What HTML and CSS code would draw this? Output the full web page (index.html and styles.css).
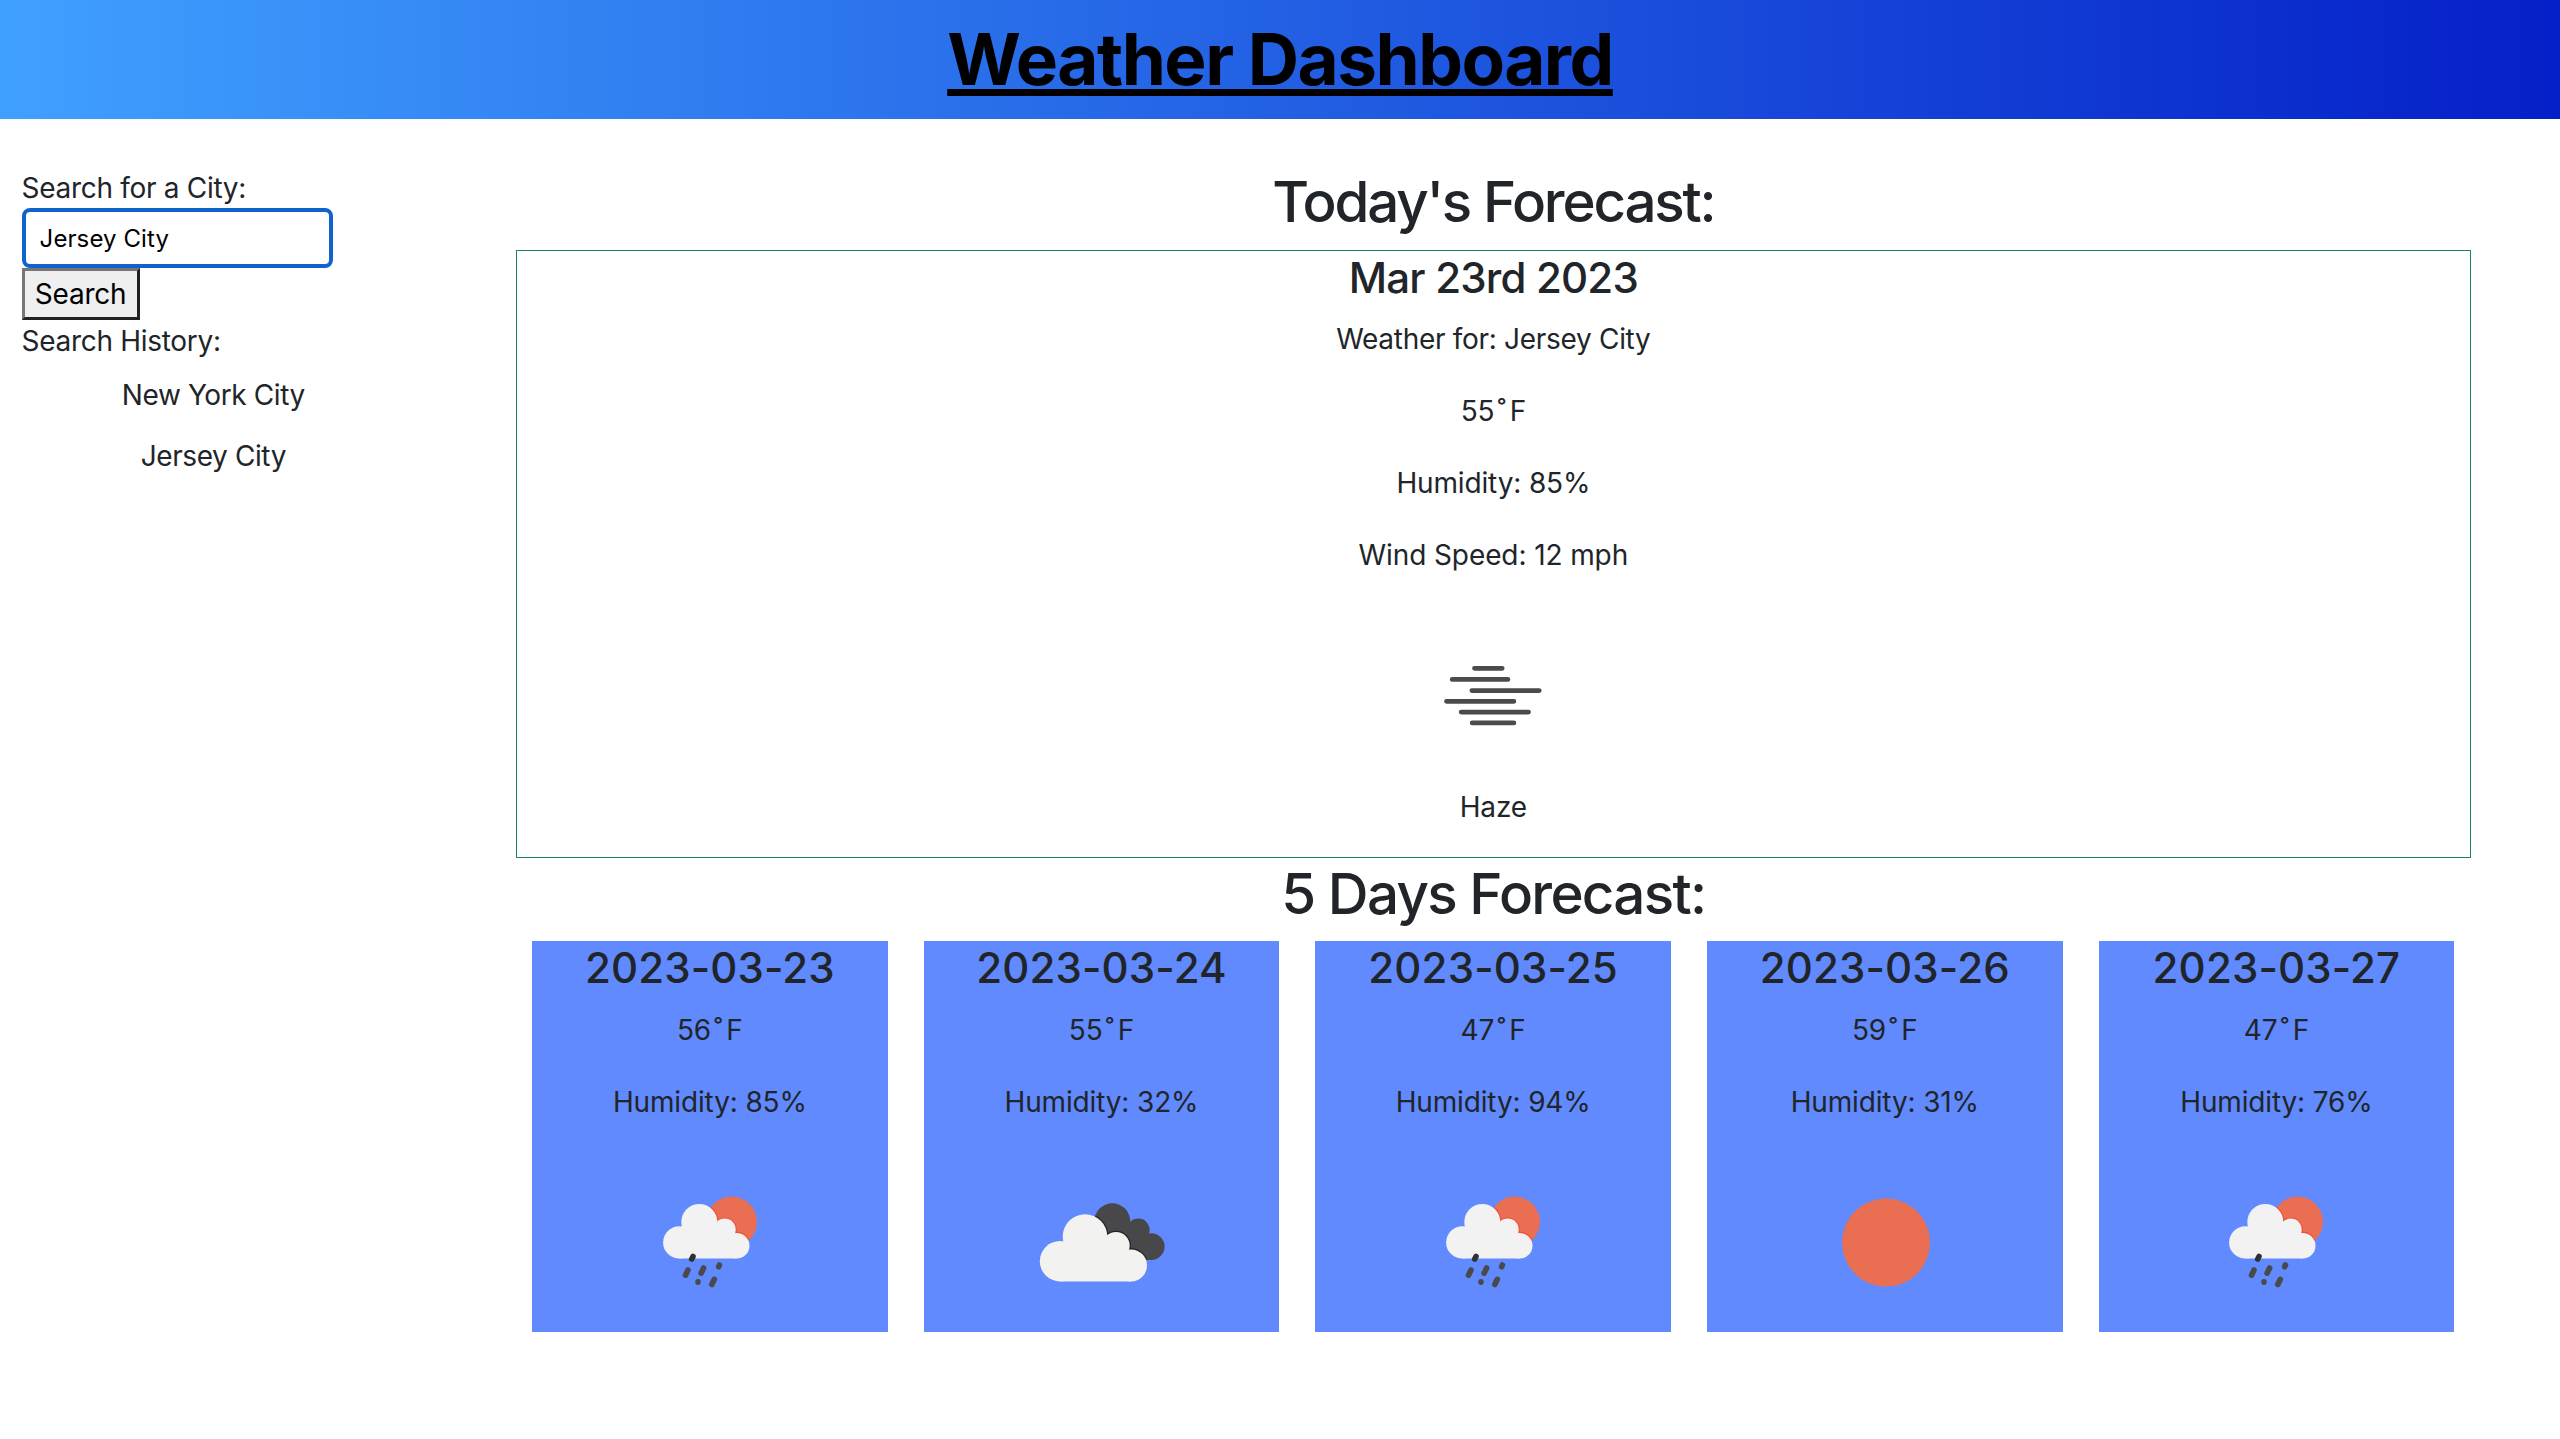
FILE: index.html
```
<!DOCTYPE html>
<html lang="en">
<head>
  <meta charset="utf-8">
  <title>Weather Dashboard</title>
  <link rel="stylesheet" href="styles.css">
</head>
<body>
  <svg class="sprite" aria-hidden="true">
    <defs>
      <clipPath id="sun-clip"><circle cx="111.7" cy="70.9" r="25.3"/></clipPath>
      <clipPath id="dark-clip">
        <circle cx="101.3" cy="70.3" r="18"/><circle cx="127.3" cy="78.9" r="11.3"/><circle cx="140.3" cy="95.6" r="13.3"/>
        <path d="M98 80H128L140 90V108.900H98Z"/>
      </clipPath>
      <g id="small-cloud">
        <circle cx="79.3" cy="70.9" r="18"/><circle cx="59.3" cy="91.4" r="16.2"/>
        <circle cx="104.7" cy="78.6" r="11"/><circle cx="116.7" cy="94.8" r="12.8"/>
        <path d="M59.300 82L70 72H98L106 84H116.700V107.600H59.300Z"/>
      </g>
      <g id="big-cloud">
        <circle cx="74" cy="85.600" r="22.300"/><circle cx="49" cy="110.200" r="20.200"/>
        <circle cx="105" cy="94.600" r="13.700"/><circle cx="120" cy="114.400" r="16"/>
        <path d="M49 98L60 90H96L106 100H120V130.400H49Z"/>
      </g>
      <symbol id="rain" viewBox="0 0 180 180">
        <circle cx="111.7" cy="70.9" r="25.3" fill="#ea6e51"/>
        <g clip-path="url(#sun-clip)"><use href="#small-cloud" fill="#ee5238" stroke="#ee5238" stroke-width="2.400"/></g>
        <use href="#small-cloud" fill="#f2f2f2"/>
        <g stroke="#4a4a4c" stroke-width="5.600" stroke-linecap="round">
          <path d="M73 105.500L71.700 108" stroke="#303030"/>
          <path d="M68 119L65.500 124.200M83.600 117L81.100 122.200M99.400 114L98.600 115.800M78 130.700L78 131.100M94.300 128.300L91.800 133.500"/>
        </g>
      </symbol>
      <symbol id="clouds" viewBox="0 0 180 180">
        <g clip-path="url(#dark-clip)">
          <path d="M80 50H156V111H80Z" fill="#48484a"/>
          <use href="#big-cloud" stroke="#242425" stroke-width="2.400" fill="#242425"/>
        </g>
        <use href="#big-cloud" fill="#f2f2f1"/>
      </symbol>
      <symbol id="sun" viewBox="0 0 180 180"><circle cx="91" cy="91.600" r="44" fill="#ea6e51"/></symbol>
      <symbol id="haze" viewBox="0 0 180 180">
        <path d="M71.500 62.300H99.200M49.200 73.400H104.900M68.900 84.600H136.200M43.500 95.300H110.900M58.200 106.100H125.500M69.200 116.900H110.900" stroke="#4b4b4d" stroke-width="4.800" stroke-linecap="round"/>
      </symbol>
    </defs>
  </svg>

  <header class="banner"><h1 class="banner-title">Weather Dashboard</h1></header>

  <div class="layout">
    <aside class="sidebar">
      <label class="label" for="city">Search for a City:</label>
      <input class="city-input" id="city" type="text" value="Jersey City">
      <button class="search-button" type="button">Search</button>
      <div class="label">Search History:</div>
      <ul class="history">
        <li>New York City</li>
        <li>Jersey City</li>
      </ul>
    </aside>

    <main class="forecast">
      <h2 class="section-title today-title">Today's Forecast:</h2>
      <section class="today">
        <h4 class="date">Mar 23rd 2023</h4>
        <p class="city-line">Weather for: Jersey City</p>
        <p>55<span class="degree">˚</span>F</p>
        <p>Humidity: 85%</p>
        <p class="wind">Wind Speed: 12 mph</p>
        <svg class="icon"><use href="#haze"/></svg>
        <p>Haze</p>
      </section>
      <h2 class="section-title days-title">5 Days Forecast:</h2>
      <section class="days">
        <article class="day">
          <h4 class="date">2023-03-23</h4>
          <p>56<span class="degree">˚</span>F</p>
          <p>Humidity: 85%</p>
          <svg class="icon"><use href="#rain"/></svg>
        </article>
        <article class="day">
          <h4 class="date">2023-03-24</h4>
          <p>55<span class="degree">˚</span>F</p>
          <p>Humidity: 32%</p>
          <svg class="icon"><use href="#clouds"/></svg>
        </article>
        <article class="day">
          <h4 class="date">2023-03-25</h4>
          <p>47<span class="degree">˚</span>F</p>
          <p>Humidity: 94%</p>
          <svg class="icon"><use href="#rain"/></svg>
        </article>
        <article class="day">
          <h4 class="date">2023-03-26</h4>
          <p>59<span class="degree">˚</span>F</p>
          <p>Humidity: 31%</p>
          <svg class="icon"><use href="#sun"/></svg>
        </article>
        <article class="day">
          <h4 class="date">2023-03-27</h4>
          <p>47<span class="degree">˚</span>F</p>
          <p>Humidity: 76%</p>
          <svg class="icon"><use href="#rain"/></svg>
        </article>
      </section>
    </main>
  </div>
</body>
</html>
```
FILE: styles.css
```
* {
  box-sizing: border-box;
}

body {
  margin: 0;
  background: #fff;
  color: #212529;
  font-family: Inter, "Liberation Sans", sans-serif;
  font-size: 28px;
  line-height: 43.2px;
  letter-spacing: -0.15px;
}

h1, h2, h4, p, ul {
  margin: 0;
}

.sprite {
  display: block;
  width: 0;
  height: 0;
}

.banner {
  height: 119px;
  padding-top: 16px;
  background: linear-gradient(to right, #40a0ff, #0520c8);
  text-align: center;
}

.banner-title {
  color: #000;
  font-size: 71px;
  font-weight: 700;
  line-height: 86.4px;
  letter-spacing: -1.52px;
  text-decoration: underline;
  text-decoration-thickness: 7px;
  text-decoration-skip-ink: none;
  text-underline-offset: 4px;
}

.layout {
  display: grid;
  grid-template-columns: 426.7px 1fr;
  padding-top: 48px;
}

.sidebar {
  display: flex;
  flex-direction: column;
  align-items: flex-start;
  padding: 0 21.6px;
  letter-spacing: -0.3px;
}

.city-input {
  width: 311px;
  height: 60px;
  margin-top: -2px;
  padding: 0 14px;
  border: 4px solid #1062cc;
  border-radius: 8px;
  outline: 0;
  background: #fff;
  color: #000;
  font-family: inherit;
  font-size: 24px;
  letter-spacing: 0.1px;
}

.search-button {
  width: 118px;
  height: 52px;
  padding: 0;
  border: 3px solid;
  border-color: #767676 #212121 #212121 #767676;
  background: #efefef;
  color: #000;
  font: inherit;
  letter-spacing: -0.2px;
}

.label {
  white-space: nowrap;
}

.history {
  align-self: stretch;
  padding: 1.4px 0 0;
  list-style: none;
  text-align: center;
  letter-spacing: -0.4px;
}

.history li {
  padding: 9px 0;
}

.forecast {
  width: 1955px;
  justify-self: center;
  text-align: center;
}

.section-title {
  font-size: 56.5px;
  font-weight: 540;
  line-height: 69px;
}

.today-title {
  margin-bottom: 14px;
  letter-spacing: -2.2px;
}

.days-title {
  margin-top: 1px;
  margin-bottom: 13.6px;
  letter-spacing: -1.7px;
}

.today {
  height: 607.5px;
  padding-top: 1px;
  border: 1px solid #198754;
}

.today .date {
  letter-spacing: -0.8px;
}

.date {
  margin-bottom: 14.4px;
  font-size: 42px;
  font-weight: 540;
  line-height: 51.8px;
  letter-spacing: 0.15px;
}

.forecast p {
  margin-bottom: 28.8px;
}

.city-line {
  letter-spacing: -0.3px;
}

.wind {
  letter-spacing: -0.1px;
}

.degree {
  padding: 0 4px 0 3px;
}

.icon {
  display: block;
  width: 180px;
  height: 180px;
  margin: 0 auto;
}

.days {
  display: grid;
  grid-template-columns: repeat(5, 1fr);
  gap: 36px;
  padding: 0 16.6px 0 16.2px;
}

.day {
  height: 390.8px;
  padding-top: 1px;
  background: #608afd;
}

.day .date {
  margin-bottom: 15px;
}

.day .icon {
  margin-top: -2.4px;
}
```
